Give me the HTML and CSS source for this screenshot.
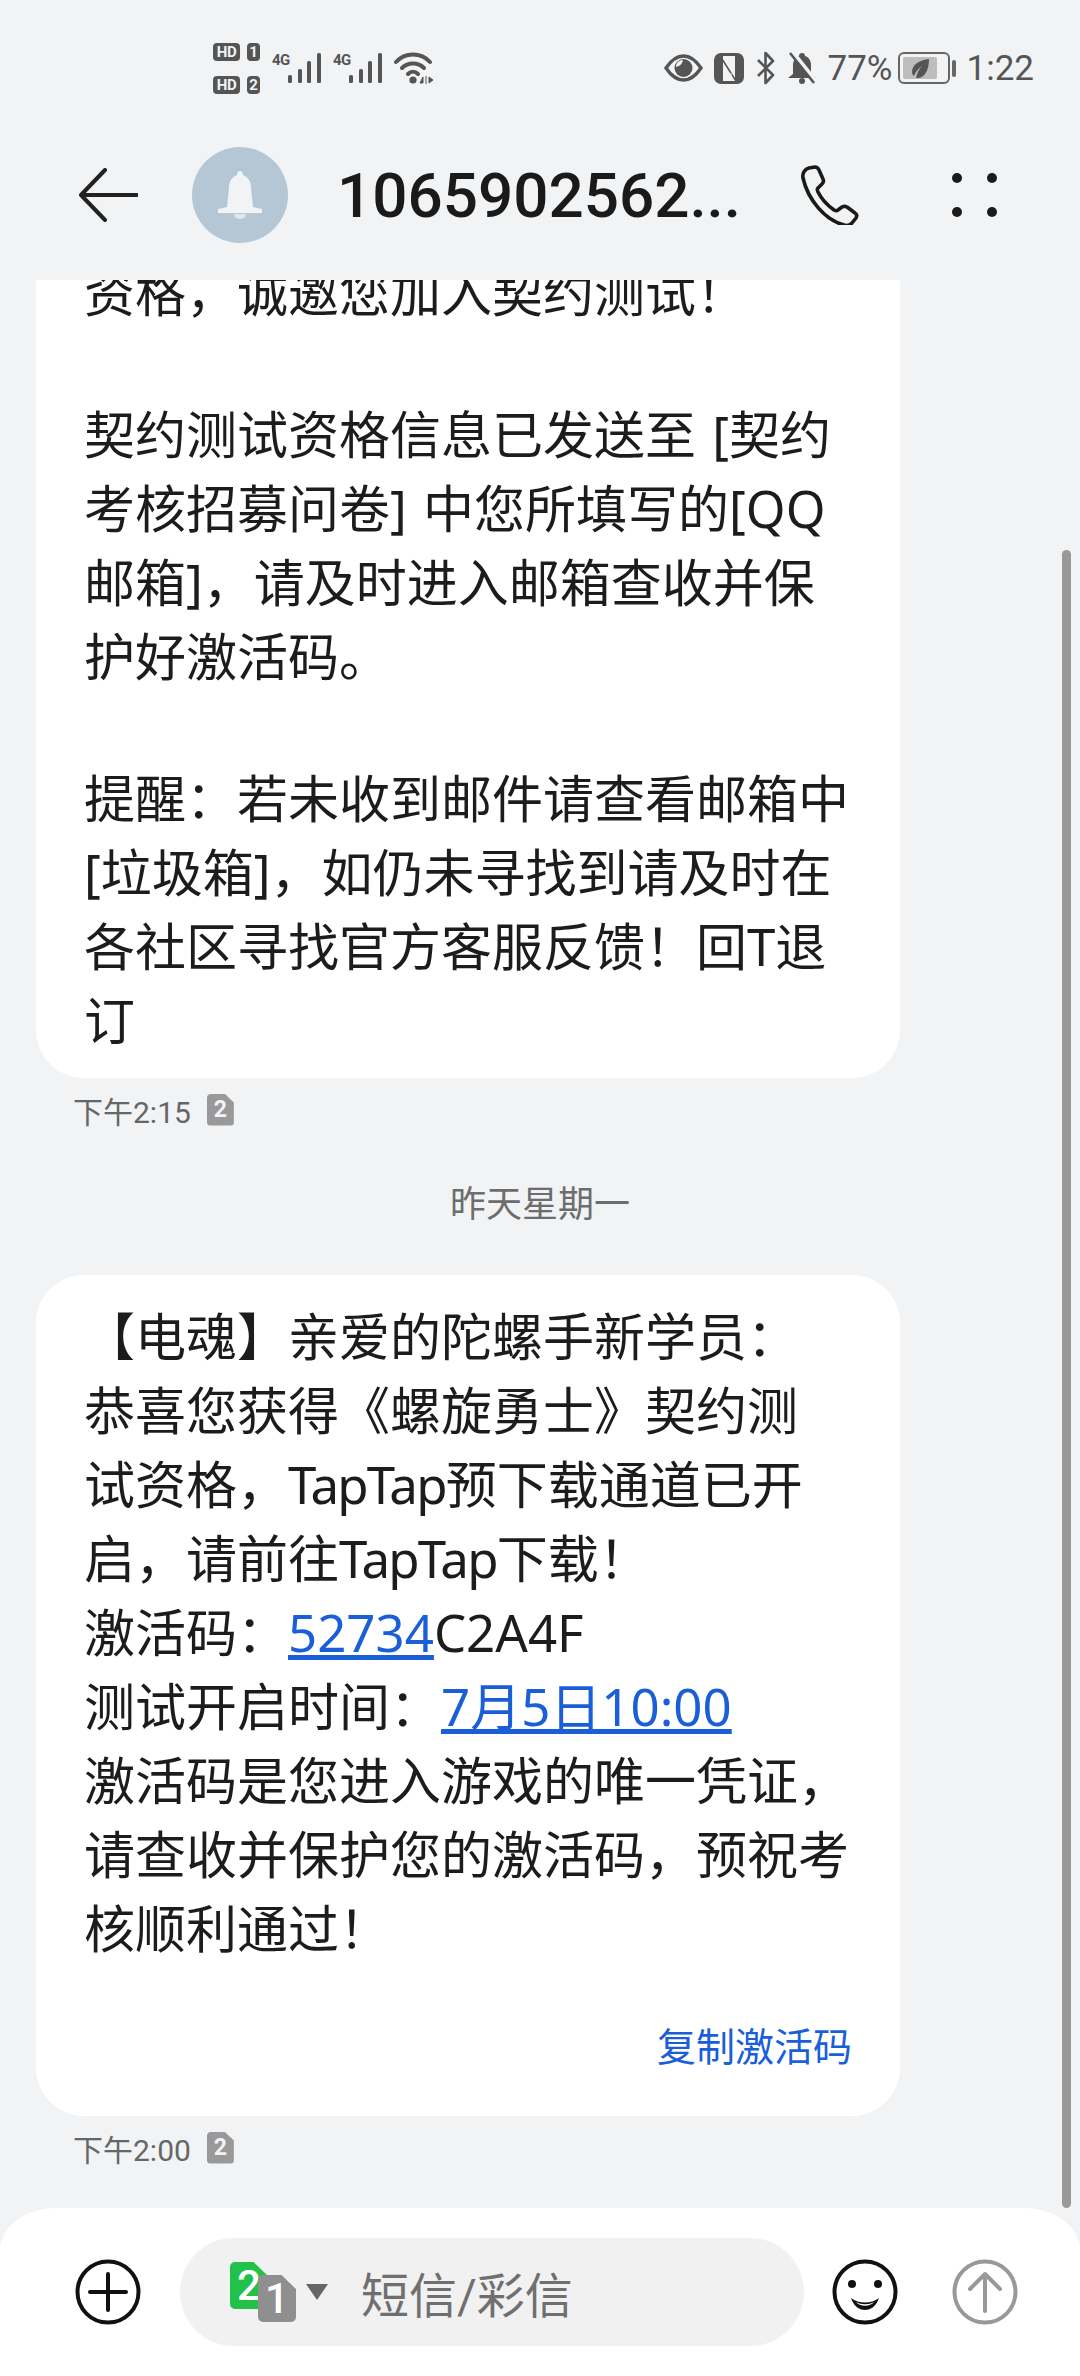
FILE: index.html
```html
<!DOCTYPE html>
<html lang="zh-CN">
<head>
    <meta charset="UTF-8">
    <meta name="viewport" content="width=device-width, initial-scale=1.0">
    <title>短信</title>
    <link rel="stylesheet" href="styles.css">
</head>
<body>
<div class="app">
    <!-- Status bar -->
    <div class="status-bar">
        <div class="status-left">
            <div class="hd-stack">
                <div class="hd-row"><span class="hd-tag">HD</span><span class="hd-num">1</span></div>
                <div class="hd-row"><span class="hd-tag">HD</span><span class="hd-num">2</span></div>
            </div>
            <div class="signal"><span class="signal-label">4G</span>
                <svg width="33" height="30" viewBox="0 0 33 30"><g fill="#555"><rect x="0" y="22" width="4" height="8" rx="1.5"/><rect x="10" y="16" width="4" height="14" rx="1.5"/><rect x="19" y="8" width="4" height="22" rx="1.5"/><rect x="29" y="0" width="4" height="30" rx="1.5"/></g></svg>
            </div>
            <div class="signal"><span class="signal-label">4G</span>
                <svg width="33" height="30" viewBox="0 0 33 30"><g fill="#555"><rect x="0" y="22" width="4" height="8" rx="1.5"/><rect x="10" y="16" width="4" height="14" rx="1.5"/><rect x="19" y="8" width="4" height="22" rx="1.5"/><rect x="29" y="0" width="4" height="30" rx="1.5"/></g></svg>
            </div>
            <svg class="wifi" width="40" height="32" viewBox="0 0 40 32"><g fill="none" stroke="#555" stroke-width="4" stroke-linecap="round"><path d="M2 10C11 0 27 0 36 10"/><path d="M8 16C14 10 24 10 30 16"/><path d="M14 22C17 19 21 19 24 22"/></g><circle cx="19" cy="28" r="3.6" fill="#555"/><path d="M29 31v-6l-3 6zM32 24v8M35 25v6l4-3z" fill="#555" stroke="#555" stroke-width="1"/></svg>
        </div>
        <div class="status-right">
            <svg width="39" height="28" viewBox="0 0 39 28"><path d="M2 14C8 5 14 2 19.5 2S31 5 37 14c-6 9-12 12-17.5 12S8 23 2 14z" fill="none" stroke="#555" stroke-width="3.4"/><circle cx="19.5" cy="14" r="9" fill="#555"/><path d="M12 13c0-4 3-7 7-7-1 4-3 6-7 7z" fill="#f1f3f5"/></svg>
            <svg width="30" height="31" viewBox="0 0 30 31"><rect x="0" y="0" width="30" height="31" rx="7" fill="#555"/><rect x="6" y="3" width="18" height="25" rx="2" fill="#f1f3f5"/><path d="M6 3h3v25H6zM21 3h3v25h-3zM9 6l12 19v3L9 9z" fill="#555"/><path d="M13 3v8M17 20v8" stroke="#f1f3f5" stroke-width="1"/></svg>
            <svg width="21" height="34" viewBox="0 0 21 34"><path d="M3 9l15 15-7.5 8V2L18 10 3 25" fill="none" stroke="#555" stroke-width="2.6" stroke-linejoin="round"/></svg>
            <svg width="30" height="32" viewBox="0 0 30 32"><path d="M15 1c2 0 3 1 3 3 4 1 6 5 6 9v9l5 4H1l5-4v-9c0-4 2-8 6-9 0-2 1-3 3-3z" fill="#555"/><circle cx="15" cy="29" r="3" fill="#555"/><path d="M5 0l24 30" stroke="#f1f3f5" stroke-width="5"/><path d="M3 1l24 30" stroke="#555" stroke-width="2.6"/></svg>
            <span class="battery-pct">77%</span>
            <div class="battery">
                <div class="battery-body">
                    <div class="battery-fill">
                        <svg width="22" height="21" viewBox="0 0 22 21"><path d="M20 1C10 2 3 7 3 14c0 2 1 3 2 4 2-5 5-8 8-10-3 3-5 7-6 12 8 1 13-7 13-19z" fill="#555"/></svg>
                    </div>
                </div>
                <div class="battery-cap"></div>
            </div>
            <span class="clock">1:22</span>
        </div>
    </div>

    <!-- Title bar -->
    <div class="title-bar">
        <svg class="back-icon" width="60" height="54" viewBox="0 0 60 54"><path d="M27 2L3 27l24 25M3 27h56" fill="none" stroke="#222" stroke-width="4" stroke-linecap="round" stroke-linejoin="round"/></svg>
        <div class="avatar">
            <svg width="46" height="50" viewBox="0 0 46 50"><path d="M23 1c2 0 3 2 3 4 5 2 8 6 8 13l2 19 9 2v4H1v-4l9-2 2-19c0-7 3-11 8-13 0-2 1-4 3-4z" fill="#f1f3f5"/><path d="M17 44h12c0 3-3 5-6 5s-6-2-6-5z" fill="#dfe6ec"/></svg>
        </div>
        <div class="contact-name">1065902562...</div>
        <svg class="call-icon" width="60" height="60" viewBox="0 0 60 60"><path d="M9 3l6-1c2 0 3 1 4 3l4 9c1 2 0 4-1 5l-4 4c-1 1-1 2 0 4 4 8 9 13 16 18 2 1 3 1 4 0l4-3c2-1 3-1 5 0l8 6c2 1 2 3 1 5l-4 5c-2 2-5 3-8 2C25 55 8 35 3 13c-1-5 2-9 6-10z" fill="none" stroke="#1a1a1a" stroke-width="3.6" stroke-linejoin="round"/></svg>
        <div class="more-icon"><i></i><i></i><i></i><i></i></div>
    </div>

    <!-- Messages -->
    <div class="thread">
        <div class="bubble">
            <p>资格，诚邀您加入契约测试！</p>
            <p>契约测试资格信息已发送至 [契约<br>考核招募问卷] 中您所填写的[QQ<br>邮箱]，请及时进入邮箱查收并保<br>护好激活码。</p>
            <p>提醒：若未收到邮件请查看邮箱中<br>[垃圾箱]，如仍未寻找到请及时在<br>各社区寻找官方客服反馈！回T退<br>订</p>
        </div>
        <div class="meta"><span>下午2:15</span><span class="sim-badge">2</span></div>
        <div class="day-label">昨天星期一</div>
        <div class="bubble bubble-code">
            <p>【电魂】亲爱的陀螺手新学员：<br>恭喜您获得《螺旋勇士》契约测<br>试资格，<span class="kerned">TapTap</span>预下载通道已开<br>启，请前往<span class="kerned">TapTap</span>下载！<br>激活码：<a class="link">52734</a>C2A4F<br>测试开启时间：<a class="link">7月5日10:00</a><br>激活码是您进入游戏的唯一凭证，<br>请查收并保护您的激活码，预祝考<br>核顺利通过！</p>
            <div class="bubble-action">复制激活码</div>
        </div>
        <div class="meta"><span>下午2:00</span><span class="sim-badge">2</span></div>
        <div class="scrollbar"></div>
    </div>

    <!-- Composer -->
    <div class="composer">
        <svg width="66" height="66" viewBox="0 0 66 66"><circle cx="33" cy="33" r="30.5" fill="none" stroke="#111" stroke-width="4"/><path d="M33 15v36M15 33h36" stroke="#111" stroke-width="4" stroke-linecap="round"/></svg>
        <div class="input-pill">
            <div class="sim-switch">
                <span class="sim-card sim-green">2</span>
                <span class="sim-card sim-grey">1</span>
            </div>
            <span class="caret"></span>
            <span class="placeholder">短信/彩信</span>
        </div>
        <svg width="66" height="66" viewBox="0 0 66 66"><circle cx="33" cy="33" r="30.5" fill="none" stroke="#111" stroke-width="4"/><circle cx="20" cy="25" r="4" fill="#111"/><circle cx="46" cy="25" r="4" fill="#111"/><path d="M19 39c3 9 9 12 14 12s11-3 14-12c-8 6-20 6-28 0z" fill="#111"/><path d="M24 43c5 3 13 3 18 0-4 5-14 5-18 0z" fill="#fff"/></svg>
        <svg width="66" height="66" viewBox="0 0 66 66"><circle cx="33" cy="33" r="30.5" fill="none" stroke="#999" stroke-width="4"/><path d="M33 52V15M18 30l15-15 15 15" fill="none" stroke="#999" stroke-width="4" stroke-linecap="round" stroke-linejoin="round"/></svg>
    </div>
</div>
</body>
</html>
```

FILE: styles.css
```css
* {
    box-sizing: border-box;
}
html, body {
    margin: 0;
    padding: 0;
}
body {
    width: 1080px;
    height: 2376px;
    overflow: hidden;
    background-color: #f1f3f5;
    font-family: Roboto, "Noto Sans CJK SC", sans-serif;
    color: #1a1a1a;
}
.app {
    display: flex;
    flex-direction: column;
    height: 2376px;
}

/* Status bar */
.status-bar {
    display: flex;
    justify-content: space-between;
    align-items: center;
    height: 136px;
    padding: 0 46px 0 213px;
    color: #555;
}
.status-left, .status-right {
    display: flex;
    align-items: center;
}
.status-left {
    gap: 12px;
}
.status-right {
    gap: 11px;
}
.hd-stack {
    display: flex;
    flex-direction: column;
    gap: 15px;
}
.hd-row {
    display: flex;
    gap: 7px;
}
.hd-tag, .hd-num {
    height: 18px;
    border-radius: 4px;
    background-color: #555;
    color: #f1f3f5;
    font-size: 15px;
    font-weight: 700;
    line-height: 18px;
    text-align: center;
}
.hd-tag {
    width: 27px;
    letter-spacing: -0.5px;
}
.hd-num {
    width: 13px;
}
.signal {
    position: relative;
    padding-left: 16px;
    display: flex;
}
.signal-label {
    position: absolute;
    top: 0;
    left: 0;
    font-size: 15px;
    font-weight: 700;
    line-height: 15px;
    letter-spacing: -0.5px;
}
.battery-pct {
    font-size: 35px;
}
.battery {
    display: flex;
    align-items: center;
    gap: 2px;
    margin-left: -6px;
}
.battery-body {
    width: 52px;
    height: 32px;
    padding: 3px;
    border: 2.5px solid #666;
    border-radius: 6px;
}
.battery-fill {
    display: flex;
    align-items: center;
    justify-content: center;
    width: 82%;
    height: 100%;
    border-radius: 2px;
    background-color: #bdbdbd;
}
.battery-cap {
    width: 4px;
    height: 17px;
    border-radius: 2px;
    background-color: #666;
}
.clock {
    font-size: 35px;
}

/* Title bar */
.title-bar {
    display: flex;
    align-items: center;
    height: 144px;
    padding-left: 78px;
    padding-bottom: 26px;
}
.back-icon {
    flex: none;
}
.avatar {
    display: flex;
    align-items: center;
    justify-content: center;
    flex: none;
    width: 96px;
    height: 96px;
    margin-left: 54px;
    border-radius: 50%;
    background-color: #b5c6d5;
}
.contact-name {
    width: 460px;
    margin-left: 49px;
    font-size: 62px;
    font-weight: 500;
}
.call-icon {
    flex: none;
    margin-left: 3px;
}
.more-icon {
    display: grid;
    grid-template-columns: 10px 10px;
    gap: 24px 25px;
    margin-left: 92px;
}
.more-icon i {
    width: 10px;
    height: 10px;
    border-radius: 50%;
    background-color: #1a1a1a;
}

/* Messages */
.thread {
    position: relative;
    flex: 1;
    display: flex;
    flex-direction: column;
    justify-content: flex-end;
    align-items: flex-start;
    min-height: 0;
    overflow: hidden;
    padding: 0 36px;
}
.bubble {
    flex: none;
    width: 864px;
    padding: 24px 48px 21px 48px;
    border-radius: 48px;
    background-color: #fff;
    font-family: "Noto Sans", "Noto Sans CJK SC", sans-serif;
    font-size: 51px;
    line-height: 74px;
    word-spacing: 3px;
    color: #1c1c1c;
}
.bubble p {
    margin: 0;
    white-space: nowrap;
}
.bubble p + p {
    margin-top: 68px;
}
.bubble-code {
    padding-bottom: 42px;
}
.kerned {
    letter-spacing: -1.8px;
}
.link {
    color: #1a5fd8;
    text-decoration: underline;
}
.bubble-action {
    margin-top: 53px;
    text-align: right;
    font-size: 39px;
    line-height: 56px;
    color: #1a5fd8;
}
.meta {
    display: flex;
    align-items: center;
    flex: none;
    gap: 16px;
    height: 63px;
    padding-left: 37px;
    margin-bottom: 29px;
    font-size: 30px;
    color: #666;
}
.sim-badge {
    width: 27px;
    height: 32px;
    border-radius: 4px;
    clip-path: polygon(0 0, 65% 0, 100% 28%, 100% 100%, 0 100%);
    background-color: #999;
    color: #f1f3f5;
    font-size: 23px;
    font-weight: 700;
    line-height: 32px;
    text-align: center;
}
.day-label {
    align-self: center;
    flex: none;
    height: 100px;
    margin-top: 5px;
    font-size: 36px;
    line-height: 60px;
    color: #6d6d6d;
}
.scrollbar {
    position: absolute;
    top: 270px;
    right: 9px;
    width: 9px;
    bottom: 0;
    border-radius: 5px;
    background-color: #999;
}

/* Composer */
.composer {
    display: flex;
    align-items: center;
    flex: none;
    height: 168px;
    padding: 0 0 0 75px;
    border-radius: 56px 56px 0 0 / 42px 42px 0 0;
    background-color: #fff;
}
.composer svg {
    flex: none;
}
.input-pill {
    display: flex;
    align-items: center;
    width: 624px;
    height: 108px;
    margin: 0 28px 0 39px;
    padding-left: 50px;
    border-radius: 54px;
    background-color: #f1f1f1;
}
.composer > svg:last-child {
    margin-left: 54px;
}
.sim-switch {
    position: relative;
    flex: none;
    width: 76px;
    height: 60px;
}
.sim-card {
    position: absolute;
    width: 38px;
    height: 47px;
    border-radius: 5px;
    clip-path: polygon(0 0, 62% 0, 100% 30%, 100% 100%, 0 100%);
    color: #fff;
    font-size: 42px;
    font-weight: 500;
    line-height: 47px;
    text-align: center;
}
.sim-green {
    left: 0;
    top: 0;
    background-color: #22c24a;
}
.sim-grey {
    left: 28px;
    top: 13px;
    background-color: #8f8f8f;
}
.caret {
    flex: none;
    width: 0;
    height: 0;
    border-left: 11px solid transparent;
    border-right: 11px solid transparent;
    border-top: 16px solid #666;
}
.placeholder {
    margin-left: 33px;
    font-size: 48px;
    color: #6f6f6f;
}
```
